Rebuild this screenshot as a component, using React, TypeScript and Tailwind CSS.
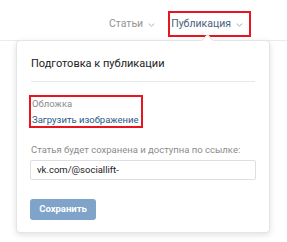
import React from 'react';

const Chevron = ({ className }: { className?: string }) => (
  <svg width="7" height="4" viewBox="0 0 7 4" className={className} fill="none">
    <path d="M1 0.8l2.5 2.4 2.5-2.4" stroke="currentColor" strokeWidth="1" strokeLinecap="round" />
  </svg>
);

const App = () => {
  return (
    <div
      className="relative w-[287px] h-[242px] overflow-hidden bg-white text-[#222]"
      style={{ fontFamily: 'Roboto, "Open Sans", Arial, sans-serif' }}
    >
      {/* top tabs */}
      <div className="h-[41px] border-b border-[#ececec] flex items-start justify-end pr-[36px] pt-[11px]">
        <div className="flex items-center h-[26px] text-[10.5px] text-[#939393] mr-[13px]">
          <span>Статьи</span>
          <Chevron className="ml-[5px] mt-[1px] text-[#b0b0b0]" />
        </div>
        <div className="flex items-center h-[26px] pl-[1px] pr-[6px] border-2 border-[#e8141e] text-[10.5px] text-[#4a5f7c]">
          <span>Публикация</span>
          <Chevron className="ml-[5px] mt-[1px] text-[#9aa6b5]" />
        </div>
      </div>

      {/* dropdown panel */}
      <div className="absolute left-[16px] top-[40px] w-[254px] h-[193px] bg-white rounded-[4px] border border-[#e3e4e6] shadow-[0_2px_6px_rgba(0,0,0,0.12)] px-[14px]">
        <div className="absolute -top-[5px] left-[186px] w-[9px] h-[9px] bg-white rotate-45 border-l border-t border-[#e3e4e6]" />
        <div className="relative pt-[16px] pb-[10px] text-[11px] leading-[14px] text-[#222] border-b border-[#e7e8ec]">
          Подготовка к публикации
        </div>
        <div className="mt-[13px] -ml-[2px] w-[114px] border-2 border-[#e8141e] pl-[1px]">
          <div className="text-[9.5px] leading-[13px] text-[#8b8b8b]">Обложка</div>
          <div className="mt-[3px] text-[9.5px] leading-[13px] text-[#2a5885] whitespace-nowrap">
            Загрузить изображение
          </div>
        </div>
        <div className="mt-[15px] text-[9.5px] leading-[13px] text-[#8b8b8b] whitespace-nowrap">
          Статья будет сохранена и доступна по ссылке:
        </div>
        <div className="mt-[4px] -ml-[1px] w-[226px] h-[20px] border border-[#dcdfe4] rounded-[2px] flex items-center pl-[6px] text-[9.5px] text-[#222]">
          vk.com/@sociallift-
        </div>
        <button className="mt-[19px] -ml-[1px] h-[21px] w-[66px] rounded-[3px] bg-[#80a3c9] text-white text-[9.5px] font-bold flex items-center justify-center">
          Сохранить
        </button>
      </div>
    </div>
  );
};

export default App;
